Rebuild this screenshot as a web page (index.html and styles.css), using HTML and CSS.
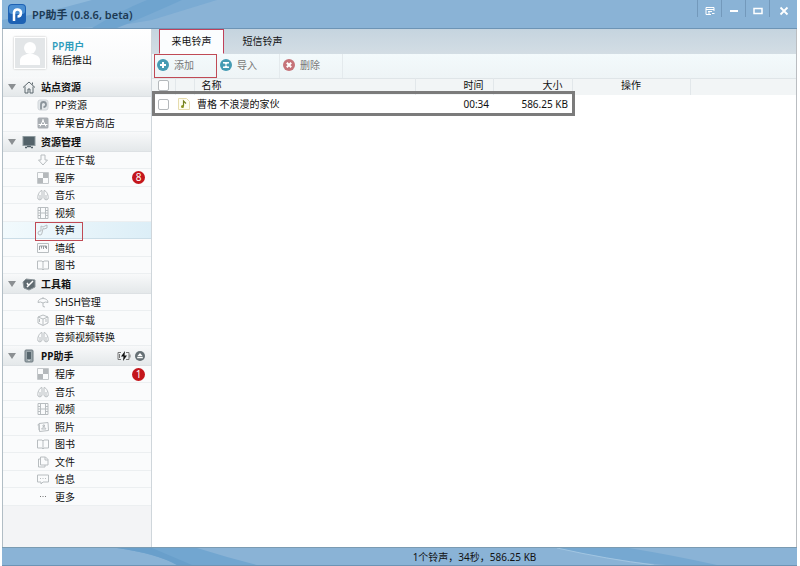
FILE: index.html
```
<!DOCTYPE html>
<html lang="zh-CN">
<head>
    <meta charset="UTF-8">
    <meta name="viewport" content="width=device-width, initial-scale=1.0">
    <title>PP助手</title>
    <link rel="stylesheet" href="styles.css">
</head>
<body>
    <!-- shared icons -->
    <svg class="sprite" aria-hidden="true">
        <symbol id="i-home" viewBox="0 0 14 14"><path d="M1 7.5L7 2l6 5.500M3 6.500V13h3V9h2v4h3V6.500M10.500 2.500v2"/></symbol>
        <symbol id="i-pp" viewBox="0 0 12 12"><rect x="1" y="1" width="10" height="10" rx="2" fill="#e3e7ea" stroke="#d0d5d9"/><path d="M4 10.500V5.500a2.500 2.500 0 1 1 2.500 2.500" stroke="#8b949b" stroke-width="1.800"/></symbol>
        <symbol id="i-store" viewBox="0 0 12 12"><rect x="0.500" y="0.500" width="11" height="11" rx="1.500" fill="#a9aeb3" stroke="none"/><path d="M3 9.500L6.500 2.500M5.500 2.500L9 9.500M1.500 7.500h9" stroke="#fff"/></symbol>
        <symbol id="i-monitor" viewBox="0 0 14 14"><rect x="1" y="1.500" width="12" height="9" fill="#536269" stroke="#8d999e"/><path d="M3 12.500h2M9 12.500h2M5 11.500h4" stroke="#536269" stroke-width="1.500"/></symbol>
        <symbol id="i-down" viewBox="0 0 12 12"><path d="M4 1h4v5h2.500L6 11 1.500 6H4z"/></symbol>
        <symbol id="i-apps" viewBox="0 0 12 12"><path d="M.5.5h11v11H.5z" stroke="#c4c8cb"/><path d="M6 1h5v5H6zM1 6h5v5H1z" fill="#b4b8bb" stroke="none"/></symbol>
        <symbol id="i-music" viewBox="0 0 12 12"><path d="M1 10C0 7 2.500 1.500 5 1.500v8L3 11 1 10M3 10V6M11 10C12 7 9.500 1.500 7 1.500v8L9 11l2-1M9 10V6"/></symbol>
        <symbol id="i-video" viewBox="0 0 12 12"><path d="M1 .5h10v11H1zM3.500.5v11M8.500.5v11M3.500 6h5M1 3.500h2.500M1 6h2.500M1 8.500h2.500M8.500 3.500H11M8.500 6H11M8.500 8.500H11"/></symbol>
        <symbol id="i-ring" viewBox="0 0 12 12"><path d="M5 9a2 2 0 1 1-2-2h1V2l2 1 4-2v3L7 5 6 4.500z"/></symbol>
        <symbol id="i-wall" viewBox="0 0 12 12"><path d="M.5 1.500h11v9H.5z"/><path d="M2.500 8V4h7v3M4.500 4v2.500M6.500 4v3M8.500 4v2" stroke="#969ca0"/></symbol>
        <symbol id="i-book" viewBox="0 0 12 12"><path d="M6 3L5 2H.5v8H5l1 1 1-1h4.500V2H7zv8"/></symbol>
        <symbol id="i-tool" viewBox="0 0 14 14"><path d="M1 5l3-3 9 1v7l-6 3-5-2z" fill="#606b71" stroke="#8b9499"/><path d="M5 10l6-6M5 6l2 3" stroke="#fff" stroke-width="1.500"/></symbol>
        <symbol id="i-umbrella" viewBox="0 0 12 12"><path d="M1 6.500C1 4 3 2.500 6 2.500S11 4 11 6.500L8.500 6 6 7 3.500 6zM6 1v1.500M6 7v3.500l2 .5"/></symbol>
        <symbol id="i-box" viewBox="0 0 12 12"><path d="M1 3l5-2 5 2v6l-5 2.500L1 9zM1 3l5 2 5-2M6 5v6M2.500 5v3M9 5v3"/></symbol>
        <symbol id="i-phone" viewBox="0 0 14 14"><rect x="3" y="1" width="8" height="12" rx="1" fill="#9aa5aa" stroke="#6f7b81"/><path d="M5 3h4v7H5z" fill="#56656c" stroke="none"/><path d="M6.500 11.500h1" stroke="#fff"/></symbol>
        <symbol id="i-photo" viewBox="0 0 12 12"><path d="M.5 4L2 3.500V9M2 2.500l9-1 .5 8-9 1zM4.500 8C5 6.500 8.500 6 9 8zM6 4h1.500v1.500H6z"/></symbol>
        <symbol id="i-file" viewBox="0 0 12 12"><path d="M3.500 1h5L11 3.500V9H3.500zM8 1v3h3M3.500 3H1.500v8H8V9"/></symbol>
        <symbol id="i-msg" viewBox="0 0 12 12"><path d="M.5 2h11v7H6l-2 2V9H.5zM3 5.500h1M5.500 5.500h1M8 5.500h1"/></symbol>
        <symbol id="i-more" viewBox="0 0 12 12"><path d="M3 5.500h1M5.500 5.500h1M8 5.500h1" stroke="#777"/></symbol>
    </svg>

    <div class="window">
        <header class="titlebar">
            <svg class="swoosh" viewBox="0 0 220 28" preserveAspectRatio="none"><path d="M0 0H215L150 20Q110 28 60 28H0z" fill="#7babd3"/><path d="M90 28Q120 10 145 0H180Q140 18 115 28z" fill="#6fa4cf"/><path d="M0 0H90Q40 14 0 20z" fill="#8fb9db"/></svg>
            <svg class="logo" viewBox="0 0 18 20"><rect width="18" height="20" rx="4" fill="#1e62b4"/><rect x="1" y="1" width="16" height="9" rx="3" fill="#4b8fd2"/><path d="M6 17V8.500a3.500 3.500 0 1 1 3.500 4" fill="none" stroke="#fff" stroke-width="2.500"/></svg>
            <h1>PP助手 (0.8.6, beta)</h1>
            <div class="win-buttons">
                <button type="button" aria-label="菜单"><svg viewBox="0 0 10 10"><path d="M1 1.500h8V5M1 1.500v7h5M1 3.500h8M3 5.500h4M3 7h2M7 7.500h2.500"/></svg></button>
                <button type="button" aria-label="最小化"><svg viewBox="0 0 10 10"><path d="M1 5h8" stroke-width="2"/></svg></button>
                <button type="button" aria-label="最大化"><svg viewBox="0 0 10 10"><path d="M1 2.500h8v5H1z" stroke-width="1.500"/></svg></button>
                <button type="button" aria-label="关闭"><svg viewBox="0 0 10 10"><path d="M1.500 1.500l7 7M8.500 1.500l-7 7" stroke-width="1.800"/></svg></button>
            </div>
        </header>

        <div class="body">
            <aside class="sidebar">
                <div class="user">
                    <svg class="avatar" viewBox="0 0 30 30"><rect width="30" height="30" fill="#e3e6e8"/><circle cx="15" cy="10" r="6" fill="#fff"/><path d="M5 27v-5q0-4 7-6h6q7 2 7 6v5z" fill="#fff"/></svg>
                    <div>
                        <a href="#" class="user-name">PP用户</a>
                        <a href="#" class="logout">稍后推出</a>
                    </div>
                </div>

                <h2><span class="arrow"></span><svg><use href="#i-home"/></svg>站点资源</h2>
                <ul>
                    <li><a href="#"><svg><use href="#i-pp"/></svg>PP资源</a></li>
                    <li><a href="#"><svg><use href="#i-store"/></svg>苹果官方商店</a></li>
                </ul>

                <h2><span class="arrow"></span><svg><use href="#i-monitor"/></svg>资源管理</h2>
                <ul>
                    <li><a href="#"><svg><use href="#i-down"/></svg>正在下载</a></li>
                    <li><a href="#"><svg><use href="#i-apps"/></svg>程序<span class="badge">8</span></a></li>
                    <li><a href="#"><svg><use href="#i-music"/></svg>音乐</a></li>
                    <li><a href="#"><svg><use href="#i-video"/></svg>视频</a></li>
                    <li class="active"><a href="#"><svg><use href="#i-ring"/></svg>铃声</a></li>
                    <li><a href="#"><svg><use href="#i-wall"/></svg>墙纸</a></li>
                    <li><a href="#"><svg><use href="#i-book"/></svg>图书</a></li>
                </ul>

                <h2><span class="arrow"></span><svg><use href="#i-tool"/></svg>工具箱</h2>
                <ul>
                    <li><a href="#"><svg><use href="#i-umbrella"/></svg>SHSH管理</a></li>
                    <li><a href="#"><svg><use href="#i-box"/></svg>固件下载</a></li>
                    <li><a href="#"><svg><use href="#i-music"/></svg>音频视频转换</a></li>
                </ul>

                <h2><span class="arrow"></span><svg><use href="#i-phone"/></svg>PP助手
                    <span class="device">
                        <svg viewBox="0 0 14 10"><path d="M4 1.500H1v7h3M9 1.500h3v7H9M13 3.500v3M2.500 3v4" stroke="#777"/><path d="M8 0L4 5.500h2.500L6 10l4-5.500H7.500z" fill="#111" stroke="none"/></svg>
                        <svg viewBox="0 0 10 10"><circle cx="5" cy="5" r="5" fill="#667075" stroke="none"/><path d="M5 2l2.800 3.200H2.200zM2.200 6h5.600v1.200H2.200z" fill="#fff" stroke="none"/></svg>
                    </span>
                </h2>
                <ul>
                    <li><a href="#"><svg><use href="#i-apps"/></svg>程序<span class="badge">1</span></a></li>
                    <li><a href="#"><svg><use href="#i-music"/></svg>音乐</a></li>
                    <li><a href="#"><svg><use href="#i-video"/></svg>视频</a></li>
                    <li><a href="#"><svg><use href="#i-photo"/></svg>照片</a></li>
                    <li><a href="#"><svg><use href="#i-book"/></svg>图书</a></li>
                    <li><a href="#"><svg><use href="#i-file"/></svg>文件</a></li>
                    <li><a href="#"><svg><use href="#i-msg"/></svg>信息</a></li>
                    <li><a href="#"><svg><use href="#i-more"/></svg>更多</a></li>
                </ul>
            </aside>

            <main class="main">
                <nav class="tabs">
                    <button type="button" class="tab selected">来电铃声</button>
                    <button type="button" class="tab">短信铃声</button>
                </nav>
                <div class="toolbar">
                    <button type="button" class="marked"><svg viewBox="0 0 12 12"><circle cx="6" cy="6" r="6" fill="#459bb3"/><path d="M6 3v6M3 6h6" stroke="#fff" stroke-width="2"/></svg>添加</button>
                    <button type="button"><svg viewBox="0 0 12 12"><circle cx="6" cy="6" r="6" fill="#459bb3"/><path d="M3 3h6v1.500H7.500L6 6 4.500 4.500H3zM3 9h6V7.500H7.500L6 6 4.500 7.500H3z" fill="#fff"/></svg>导入</button>
                    <button type="button"><svg viewBox="0 0 12 12"><circle cx="6" cy="6" r="6" fill="#c67379"/><path d="M3.800 3.800l4.400 4.400M8.200 3.800L3.800 8.200" stroke="#fff" stroke-width="2"/></svg>删除</button>
                </div>
                <div class="list">
                    <table>
                        <thead>
                            <tr>
                                <th class="c-check"><input type="checkbox" aria-label="全选"></th>
                                <th class="c-icon"></th>
                                <th class="c-name">名称</th>
                                <th class="c-time">时间</th>
                                <th class="c-size">大小</th>
                                <th class="c-action">操作</th>
                                <th></th>
                            </tr>
                        </thead>
                        <tbody>
                            <tr>
                                <td class="c-check"><input type="checkbox" aria-label="曹格 不浪漫的家伙"></td>
                                <td class="c-icon"><svg viewBox="0 0 12 12"><path d="M.5.5h8l3 3v8H.5z" fill="#fffdf0" stroke="#e6dcae"/><path d="M5.500 8V3l2.500 2.500" fill="none" stroke="#75801e" stroke-width="1.200"/><circle cx="4.500" cy="8.500" r="1.500" fill="#8a921e"/></svg></td>
                                <td class="c-name">曹格 不浪漫的家伙</td>
                                <td class="c-time">00:34</td>
                                <td class="c-size">586.25 KB</td>
                                <td class="c-action"></td>
                                <td></td>
                            </tr>
                        </tbody>
                    </table>
                    <span class="frame"></span>
                </div>
            </main>
        </div>

        <footer class="status">
            <svg class="wave-left" viewBox="0 0 150 18" preserveAspectRatio="none"><path d="M0 0H80Q110 10 140 18H60Q40 6 0 0z" fill="#72a6d0"/><path d="M0 0H35Q55 9 75 18H60Q40 6 0 0z" fill="#699fcb"/></svg>
            <svg class="wave-right" viewBox="0 0 190 18" preserveAspectRatio="none"><path d="M0 0Q70 14 130 18H190Q140 8 85 0z" fill="#76a8d1"/><path d="M0 0Q60 12 115 18" fill="none" stroke="#a5c8e3"/></svg>
            <p>1个铃声，34秒，586.25 KB</p>
        </footer>
    </div>
</body>
</html>
```
FILE: styles.css
```
* {
    box-sizing: border-box;
}
body {
    margin: 0;
    background: #fff;
    font-family: "Noto Sans", "Noto Sans CJK SC", sans-serif;
    font-size: 10px;
    line-height: 16px;
    color: #111;
}
h1, h2, p, ul {
    margin: 0;
    padding: 0;
}
a {
    color: inherit;
    text-decoration: none;
}
button {
    font: inherit;
    color: inherit;
    background: none;
    border: 0;
    padding: 0;
}
svg {
    fill: none;
    flex-shrink: 0;
}
.sprite {
    position: absolute;
    width: 0;
    height: 0;
}
.window {
    display: flex;
    flex-direction: column;
    height: 100vh;
    margin: 0 3px 0 2px;
}

/* title bar */
.titlebar {
    position: relative;
    display: flex;
    align-items: center;
    height: 29px;
    padding-left: 6px;
    background: #8ab3d6;
    border-bottom: 1px solid #6d94b5;
}
.swoosh {
    position: absolute;
    left: 0;
    top: 0;
    width: 220px;
    height: 28px;
}
.logo {
    position: relative;
    width: 18px;
    height: 20px;
}
.titlebar h1 {
    position: relative;
    flex: 1;
    margin-left: 6px;
    padding-top: 2px;
    font-size: 11px;
    font-weight: 600;
    color: #1d3a54;
}
.win-buttons {
    display: flex;
    align-self: flex-start;
}
.win-buttons button {
    width: 24px;
    height: 17px;
    padding-top: 4px;
    border-left: 1px solid #7399bb;
    display: flex;
    align-items: center;
    justify-content: center;
}
.win-buttons button:last-child {
    width: 28px;
}
.win-buttons svg {
    width: 10px;
    height: 10px;
    stroke: #fff;
}

.body {
    flex: 1;
    display: flex;
    min-height: 0;
    border-left: 1px solid #b1bdc5;
    border-right: 1px solid #b9bdc1;
}

/* sidebar */
.sidebar {
    width: 149px;
    flex-shrink: 0;
    background: #f3f4f6;
    border-right: 1px solid #cfd6db;
}
.user {
    display: flex;
    align-items: center;
    gap: 6px;
    height: 48px;
    padding-left: 11px;
    background: linear-gradient(#fff, #f6f8f9);
    line-height: 14px;
}
.user a {
    display: block;
}
.avatar {
    width: 32px;
    height: 32px;
    border: 1px solid #fff;
    box-shadow: 0 0 2px #bbb;
}
.user-name {
    color: #2f9cbc;
    font-weight: 600;
}
.sidebar h2 {
    display: flex;
    align-items: center;
    gap: 6px;
    height: 20px;
    padding: 0 6px 0 5px;
    font-size: 10px;
    font-weight: 700;
    background: linear-gradient(#f8f9fa, #e4e8ea);
    border-bottom: 1px solid #dde1e4;
}
.sidebar h2 > svg {
    width: 14px;
    height: 14px;
    margin-right: -1px;
    stroke: #5d686e;
}
.arrow {
    border: 4px solid transparent;
    border-top: 6px solid #8b8f92;
    border-bottom: 0;
}
.device {
    display: flex;
    align-items: center;
    gap: 4px;
    margin-left: auto;
}
.device svg {
    width: 14px;
    height: 10px;
}
.device svg:last-child {
    width: 10px;
}
.sidebar ul {
    list-style: none;
    background: #fafbfc;
}
.sidebar li {
    height: 17px;
    border-bottom: 1px solid #eceff1;
}
.sidebar li:nth-child(even) {
    height: 18px;
}
.sidebar li a {
    display: flex;
    align-items: center;
    gap: 6px;
    height: 100%;
    padding: 0 6px 0 34px;
}
.sidebar li svg {
    width: 12px;
    height: 12px;
    stroke: #b8bdc0;
}
.sidebar li.active {
    position: relative;
    background: linear-gradient(90deg, #f2fafd, #dceef7);
    border-bottom-color: #cbdde7;
}
.sidebar li.active::after {
    content: "";
    position: absolute;
    left: 32px;
    top: 0;
    width: 46px;
    height: 17px;
    border: 1px solid #c04a55;
}
.badge {
    width: 13px;
    height: 13px;
    margin-left: auto;
    border-radius: 50%;
    background: #c4161c;
    color: #fff;
    line-height: 13px;
    text-align: center;
}

/* content */
.main {
    flex: 1;
    min-width: 0;
    background: #fff;
}
.tabs {
    display: flex;
    height: 25px;
    padding-left: 7px;
    background: linear-gradient(#c5d4df, #d3dde4);
}
.tab {
    width: 65px;
    margin-right: 6px;
    padding-bottom: 2px;
}
.tab.selected {
    background: #fbfdfe;
    border: 1px solid #c0405a;
    border-bottom-color: #fbfdfe;
}
.toolbar {
    display: flex;
    height: 24px;
    padding-left: 2px;
    background: linear-gradient(#f3fafc, #eef4f6);
    color: #777;
}
.toolbar button {
    display: flex;
    align-items: center;
    gap: 5px;
    width: 63px;
    padding: 0 0 3px 3px;
    border-right: 1px solid #e4eaed;
}
.toolbar button.marked {
    border: 1px solid #c04a55;
    padding-left: 2px;
}
.toolbar svg {
    width: 12px;
    height: 12px;
}
.list {
    position: relative;
}
table {
    width: 100%;
    table-layout: fixed;
    border-collapse: collapse;
}
th, td {
    padding: 0;
    font-weight: 400;
    text-align: left;
}
th {
    height: 16px;
    line-height: 13px;
    vertical-align: top;
    background: #f2f5f6;
    border-top: 1px solid #dfe5e8;
    border-right: 1px solid #e2e7ea;
}
th:last-child {
    border-right: 0;
}
td {
    height: 19px;
}
.c-check {
    width: 23px;
    padding-left: 6px;
}
.c-icon {
    width: 19px;
    padding-left: 3px;
}
.c-icon svg {
    display: block;
    width: 12px;
    height: 12px;
}
.c-name {
    width: 221px;
    padding-left: 3px;
}
th.c-name {
    padding-left: 7px;
}
.c-time {
    width: 78px;
    text-align: right;
    padding-right: 4px;
}
.c-size {
    width: 79px;
    text-align: right;
    padding-right: 4px;
}
th.c-time, th.c-size {
    padding-right: 9px;
}
.c-action {
    width: 118px;
    text-align: center;
}
input[type="checkbox"] {
    appearance: none;
    display: block;
    width: 11px;
    height: 11px;
    margin: 0;
    border: 1px solid #b4b8bb;
    border-radius: 2px;
    background: #fff;
}
th input[type="checkbox"] {
    margin-top: 1px;
}
/* outline round the first row, up to the size column */
.frame {
    position: absolute;
    left: 0;
    top: 13px;
    width: 423px;
    height: 25px;
    border: 3px solid #7b7b7b;
    pointer-events: none;
}

/* status bar */
.status {
    position: relative;
    height: 19px;
    padding-left: 150px;
    background: #8ab3d6;
    border-top: 1px solid #7a9bb2;
    border-bottom: 1px solid #6d94b5;
    text-align: center;
}
.status p {
    position: relative;
    line-height: 18px;
}
.wave-left, .wave-right {
    position: absolute;
    top: 0;
    height: 17px;
}
.wave-left {
    left: 115px;
    width: 150px;
}
.wave-right {
    right: 80px;
    width: 160px;
}
```
